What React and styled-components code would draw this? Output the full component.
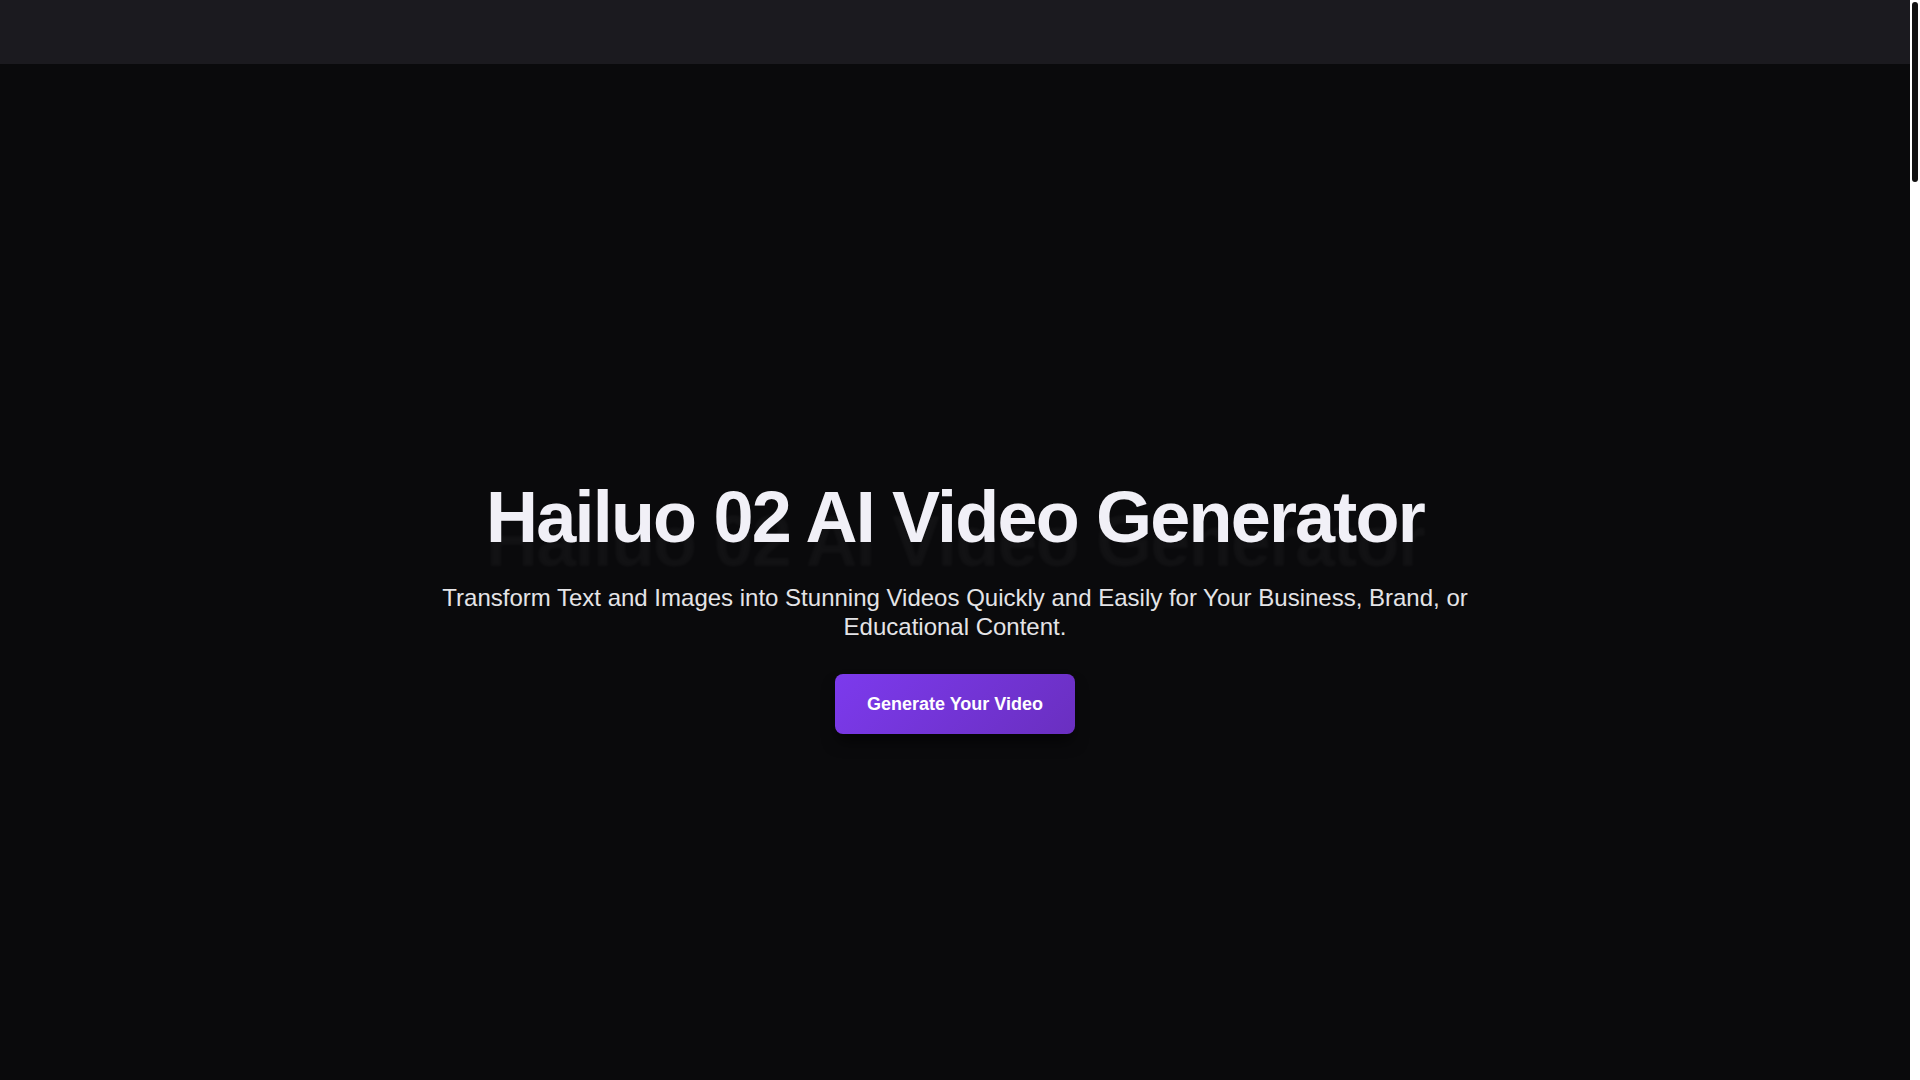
import React from 'react';
import styled, { createGlobalStyle } from 'styled-components';

const GlobalStyle = createGlobalStyle`
  html, body {
    margin: 0;
    height: 100%;
    overflow: hidden;
    background: #0a0a0c;
  }

  body {
    font-family: 'Liberation Sans', Arial, sans-serif;
    -webkit-font-smoothing: antialiased;
  }
`;

const Layout = styled.div`
  display: flex;
  height: 100vh;
`;

const Page = styled.div`
  flex: 1;
  min-width: 0;
  overflow-y: auto;
  background: #0a0a0c;
  scrollbar-width: none;

  &::-webkit-scrollbar {
    display: none;
  }
`;

// page-level scrollbar rail, as the browser paints it in the reference
const ScrollRail = styled.div`
  width: 10px;
  flex-shrink: 0;
  background: #ffffff;
  padding: 2px;
  box-sizing: border-box;
`;

const ScrollThumb = styled.div`
  height: 180px;
  border-radius: 3px;
  background: #111111;
`;

const Header = styled.header`
  height: 64px;
  background: #1b1a1f;
`;

const Hero = styled.section`
  min-height: 100vh;
  display: flex;
  flex-direction: column;
  align-items: center;
  justify-content: center;
  text-align: center;
  padding: 0 24px;
  box-sizing: border-box;
`;

const Title = styled.h1`
  margin: 0 0 24px;
  font-size: 72px;
  line-height: 1.2;
  font-weight: 700;
  letter-spacing: -0.025em;
  color: #f1f0f7;
  text-shadow: 0 24px 3px rgba(255, 255, 255, 0.035);
`;

const Subtitle = styled.p`
  margin: 0 0 32px;
  max-width: 1100px;
  font-size: 24px;
  line-height: 1.2;
  color: #e4e4e7;
`;

const CtaButton = styled.button`
  border: none;
  border-radius: 8px;
  padding: 16px 32px;
  font-family: inherit;
  font-size: 18px;
  line-height: 28px;
  font-weight: 700;
  color: #ffffff;
  cursor: pointer;
  background: linear-gradient(135deg, #7c3aed 0%, #6a2fc0 100%);
  box-shadow: 0 10px 15px -3px rgba(0, 0, 0, 0.6);
  transition: transform 0.2s;

  &:hover {
    transform: translateY(-2px);
  }
`;

const MoreContent = styled.div`
  min-height: 5336px;
`;

const App = () => {
  return (
    <Layout>
      <GlobalStyle />
      <Page>
        <Header />
        <Hero>
          <Title>Hailuo 02 AI Video Generator</Title>
          <Subtitle>
            Transform Text and Images into Stunning Videos Quickly and Easily for Your Business, Brand, or
            Educational Content.
          </Subtitle>
          <CtaButton>Generate Your Video</CtaButton>
        </Hero>
        <MoreContent />
      </Page>
      <ScrollRail>
        <ScrollThumb />
      </ScrollRail>
    </Layout>
  );
};

export default App;
